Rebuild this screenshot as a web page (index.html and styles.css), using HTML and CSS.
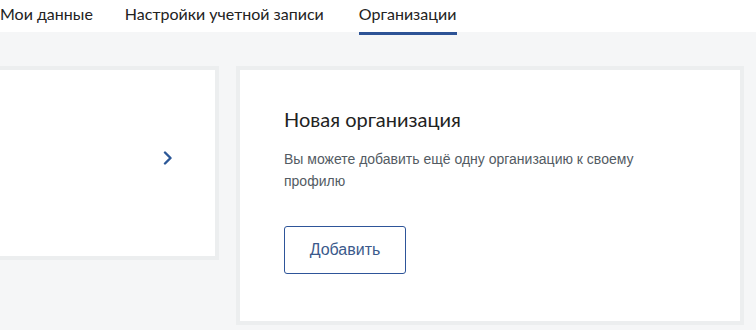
FILE: index.html
```html
<!DOCTYPE html>
<html lang="ru">
<head>
<meta charset="utf-8">
<link rel="stylesheet" href="styles.css">
</head>
<body>
<nav class="tabs">
  <a class="tab tab-first">Мои данные</a>
  <a class="tab tab-second">Настройки учетной записи</a>
  <a class="tab tab-active">Организации</a>
</nav>
<main class="cards">
  <section class="card card-org">
    <svg class="chevron" width="10" height="14" viewBox="0 0 10 14"><path d="M2 1.5 L7.5 7 L2 12.5" fill="none" stroke="#2b5797" stroke-width="2.4" stroke-linecap="round" stroke-linejoin="round"/></svg>
  </section>
  <section class="card card-new">
    <h2 class="card-title">Новая организация</h2>
    <p class="card-text">Вы можете добавить ещё одну организацию к своему профилю</p>
    <button class="btn">Добавить</button>
  </section>
</main>
</body>
</html>
```
FILE: styles.css
```css
html, body {
  margin: 0;
  padding: 0;
}
body {
  background: #f5f6f7;
  width: 756px;
  height: 330px;
  overflow: hidden;
}
.tabs {
  display: flex;
  height: 32px;
  background: #fff;
  font-family: Lato, "Noto Sans", sans-serif;
  font-size: 16px;
  color: #222;
}
.tab {
  line-height: 28px;
  position: relative;
  white-space: nowrap;
}
.tab-first { margin-left: 0; }
.tab-second { margin-left: 32px; }
.tab-active { margin-left: 35px; }
.tab-active::after {
  content: "";
  position: absolute;
  left: 0;
  right: -1px;
  top: 32px;
  height: 3px;
  background: #2d5396;
}
.cards {
  display: flex;
  align-items: flex-start;
  gap: 17px;
  margin-top: 34px;
  margin-left: -289px;
}
.card {
  box-sizing: border-box;
  width: 508px;
  background: #fff;
  border: 4px solid #eceeef;
}
.card-org {
  height: 194px;
  display: flex;
  align-items: center;
  justify-content: flex-end;
  padding-right: 42px;
  padding-bottom: 10px;
}
.chevron { display: block; }
.card-new {
  height: 259px;
  padding: 37px 44px 0;
}
.card-title {
  margin: 0;
  font-family: Lato, "Noto Sans", sans-serif;
  font-weight: 400;
  font-size: 20px;
  line-height: 24px;
  color: #222;
}
.card-text {
  margin: 17px 0 0;
  width: 370px;
  font-family: "Liberation Sans", Arial, sans-serif;
  font-size: 14px;
  line-height: 22px;
  color: #535b63;
}
.btn {
  margin-top: 34px;
  width: 122px;
  height: 48px;
  background: #fff;
  border: 1px solid #2e5599;
  border-radius: 3px;
  font-family: "Liberation Sans", Arial, sans-serif;
  font-size: 16px;
  color: #3b5a8c;
  padding: 0;
}
```
